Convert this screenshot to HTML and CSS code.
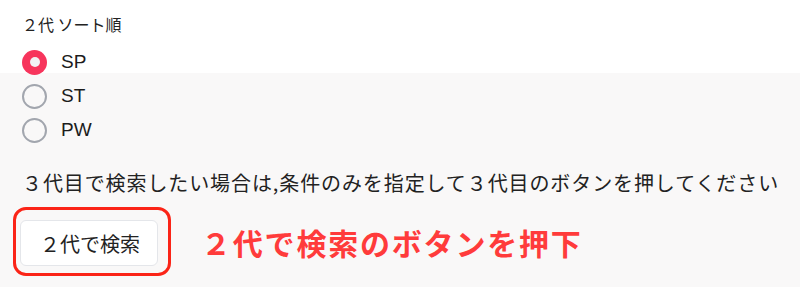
FILE: index.html
```html
<!DOCTYPE html>
<html lang="ja">
<head>
<meta charset="utf-8">
<link rel="stylesheet" href="styles.css">
</head>
<body>
<div class="page">
  <div class="field-label">２代 ソート順</div>
  <div class="radios">
    <label class="radio-row"><span class="radio checked"></span><span class="radio-text">SP</span></label>
    <label class="radio-row"><span class="radio"></span><span class="radio-text">ST</span></label>
    <label class="radio-row"><span class="radio"></span><span class="radio-text">PW</span></label>
  </div>
  <p class="note">３代目で検索したい場合は,条件のみを指定して３代目のボタンを押してください</p>
  <div class="action-row">
    <div class="highlight">
      <button class="btn">２代で検索</button>
    </div>
    <div class="callout">２代で検索のボタンを押下</div>
  </div>
</div>
</body>
</html>
```

FILE: styles.css
```css
html, body {
  margin: 0;
  padding: 0;
}
body {
  background: linear-gradient(#ffffff 0, #ffffff 73px, #f9f8f8 73px, #f9f8f8 100%);
  min-height: 287px;
  font-family: "Liberation Sans", "Noto Sans CJK JP", sans-serif;
  color: #222222;
}
.page {
  padding: 12px 0 0 22px;
  display: flex;
  flex-direction: column;
}
.field-label {
  font-family: "Noto Sans CJK JP", sans-serif;
  font-size: 16px;
  line-height: 24px;
  height: 24px;
}
.radios {
  margin-top: 9px;
  display: flex;
  flex-direction: column;
}
.radio-row {
  height: 34px;
  display: flex;
  align-items: center;
  margin-left: 0;
}
.radio {
  box-sizing: border-box;
  width: 25px;
  height: 25px;
  border-radius: 50%;
  border: 2.5px solid #a2a6ae;
  background: transparent;
  display: flex;
  align-items: center;
  justify-content: center;
}
.radio.checked {
  border: none;
  background: #f7355c;
}
.radio.checked::after {
  content: "";
  width: 10px;
  height: 10px;
  border-radius: 50%;
  background: #f2f2f4;
}
.radio-text {
  margin-left: 14px;
  font-size: 19px;
  color: #1c1c1c;
}
.note {
  margin: 21px 0 0 0;
  font-family: "Noto Sans CJK JP", sans-serif;
  font-size: 20px;
  line-height: 30px;
  letter-spacing: 0.9px;
  color: #222222;
}
.action-row {
  margin-top: 9px;
  display: flex;
  align-items: center;
}
.highlight {
  margin-left: -9px;
  border: 3px solid #fb2417;
  border-radius: 13px;
  padding: 10px 10px 7px 4px;
  display: flex;
}
.btn {
  box-sizing: border-box;
  width: 138px;
  height: 46px;
  background: #ffffff;
  border: 1px solid #e4e6ea;
  border-radius: 6px;
  font-family: "Noto Sans CJK JP", sans-serif;
  font-size: 20px;
  color: #222222;
  padding: 0 0 0 2px;
}
.callout {
  margin-left: 30px;
  font-family: "Noto Sans CJK JP", sans-serif;
  font-weight: 700;
  font-size: 30px;
  letter-spacing: 1.8px;
  color: #ff3b3b;
  line-height: 40px;
}
```
